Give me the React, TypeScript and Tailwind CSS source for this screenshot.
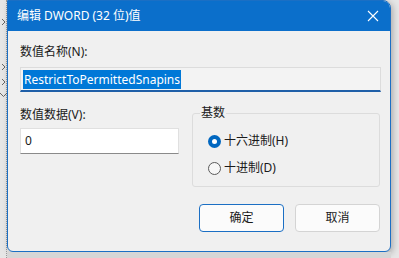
import React from 'react';

const font = { fontFamily: '"Noto Sans", "Noto Sans CJK SC", sans-serif' };

function Chevron({ top, down }: { top: number; down?: boolean }) {
  return (
    <svg width="7" height="8" viewBox="0 0 7 8" style={{ marginTop: top }}>
      <path d={down ? 'M0 2 L3.5 5.5 L7 2' : 'M2 1 L5 4 L2 7'} fill="none" stroke="#666" strokeWidth="1" />
    </svg>
  );
}

function Radio({ checked, label }: { checked: boolean; label: string }) {
  return (
    <div className="flex items-center h-[16px]">
      {checked ? (
        <span className="w-[13px] h-[13px] rounded-full bg-[#0067c0] flex items-center justify-center">
          <span className="w-[5px] h-[5px] rounded-full bg-white" />
        </span>
      ) : (
        <span className="w-[13px] h-[13px] rounded-full border border-[#5a5a5a] bg-[#f7f7f7]" />
      )}
      <span className="ml-[3px] text-[12px] text-[#1a1a1a]">{label}</span>
    </div>
  );
}

export default function App() {
  return (
    <div className="w-[399px] h-[258px] bg-[#e6e6e6] flex overflow-hidden" style={font}>
      {/* background strip of the window behind */}
      <div className="w-[7px] h-full flex flex-col items-start border-r border-dotted border-[#9a9a9a]">
        <Chevron top={18} />
        <Chevron top={37} />
        <Chevron top={7} />
        <Chevron top={5} down />
      </div>

      <div className="flex flex-col">
        <div className="w-[384px] h-[252px] bg-[#f0f0f0] border border-[#1b6fc4] rounded-tr-[8px] rounded-bl-[6px] rounded-br-[6px] flex flex-col shadow-[2px_2px_6px_rgba(0,0,0,0.25)]">
          {/* title bar */}
          <div className="h-[30px] bg-[#0b6fcb] rounded-tr-[7px] flex items-center justify-between pl-[9px] pr-[8px] text-white">
            <span className="text-[12px]">编辑 DWORD (32 位)值</span>
            <svg width="12" height="12" viewBox="0 0 12 12" className="mr-[3px]">
              <path d="M1 1 L11 11 M11 1 L1 11" stroke="white" strokeWidth="1.1" />
            </svg>
          </div>

          {/* body */}
          <div className="flex flex-col pl-[12px] pr-[10px] pt-[14px]">
            <span className="text-[12px] text-[#1a1a1a] leading-[14px]">数值名称(N):</span>
            <div className="mt-[8px] w-[361px] h-[25px] bg-[#f3f3f3] border border-[#dcdcdc] border-b-2 border-b-[#1f5fa8] flex items-center pl-[2px]">
              <span className="bg-[#0078d7] text-white text-[12px] leading-[19px] px-[1px]">RestrictToPermittedSnapins</span>
            </div>

            <div className="flex mt-[16px]">
              <div className="flex flex-col">
                <span className="text-[12px] text-[#1a1a1a] leading-[14px]">数值数据(V):</span>
                <div className="mt-[6px] w-[159px] h-[26px] bg-white border border-[#e0e0e0] border-b-[#8a8a8a] flex items-center pl-[4px] text-[12px] text-[#1a1a1a]">
                  0
                </div>
              </div>

              <div className="ml-[13px] mt-[5px] relative w-[188px] h-[74px] border border-[#dcdcdc] rounded-[3px]">
                <span className="absolute left-[7px] -top-[8px] bg-[#f0f0f0] px-[1px] text-[12px] leading-[14px] text-[#1a1a1a]">基数</span>
                <div className="flex flex-col pl-[15px] pt-[19px] gap-[11px]">
                  <Radio checked label="十六进制(H)" />
                  <Radio checked={false} label="十进制(D)" />
                </div>
              </div>
            </div>

            <div className="flex justify-end gap-[11px] mt-[17px]">
              <button className="w-[85px] h-[28px] bg-[#fbfbfb] border border-[#1b6fc4] rounded-[4px] text-[12px] text-[#1a1a1a]">确定</button>
              <button className="w-[85px] h-[28px] bg-[#fbfbfb] border border-[#d4d4d4] rounded-[4px] text-[12px] text-[#1a1a1a]">取消</button>
            </div>
          </div>
        </div>
        <div className="flex-1 bg-[#d6d6d6]" />
      </div>
    </div>
  );
}
